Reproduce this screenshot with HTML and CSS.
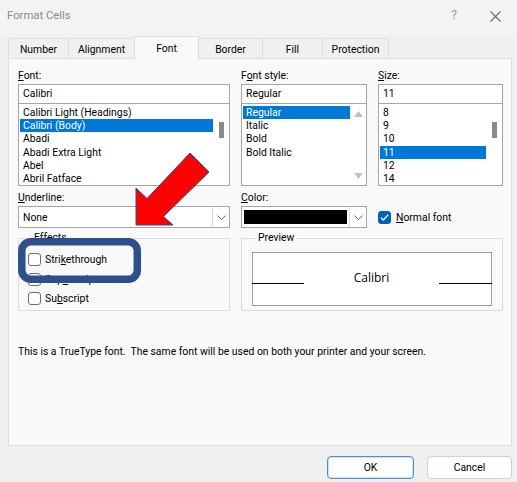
FILE: index.html
```html
<!DOCTYPE html>
<html lang="en">
<head>
    <meta charset="UTF-8">
    <title>Format Cells</title>
    <link rel="stylesheet" href="styles.css">
</head>
<body>
    <div class="dialog">
        <div class="titlebar">
            <div class="title">Format Cells</div>
            <div class="title-btns">
                <span class="help">?</span>
                <svg class="close" width="11" height="11" viewBox="0 0 11 11"><path d="M0.5 0.5 L10.5 10.5 M10.5 0.5 L0.5 10.5" stroke="#6b6b6b" stroke-width="1.1" fill="none"/></svg>
            </div>
        </div>

        <div class="tabs">
            <div class="tab w60">Number</div>
            <div class="tab w66">Alignment</div>
            <div class="tab w64 active">Font</div>
            <div class="tab w64">Border</div>
            <div class="tab w60">Fill</div>
            <div class="tab w66">Protection</div>
        </div>

        <div class="panel">
            <div class="grid">
                <div class="col">
                    <div class="label"><u>F</u>ont:</div>
                    <div class="input">Calibri</div>
                    <div class="list">
                        <div class="items">
                            <div class="item">Calibri Light (Headings)</div>
                            <div class="item sel">Calibri (Body)</div>
                            <div class="item">Abadi</div>
                            <div class="item">Abadi Extra Light</div>
                            <div class="item">Abel</div>
                            <div class="item">Abril Fatface</div>
                        </div>
                        <div class="scroll"><div class="thumb"></div></div>
                    </div>
                </div>
                <div class="col">
                    <div class="label">F<u>o</u>nt style:</div>
                    <div class="input">Regular</div>
                    <div class="list">
                        <div class="items">
                            <div class="item sel">Regular</div>
                            <div class="item">Italic</div>
                            <div class="item">Bold</div>
                            <div class="item">Bold Italic</div>
                        </div>
                        <div class="scroll arrows">
                            <svg width="9" height="6" viewBox="0 0 9 6"><path d="M0 6 L4.5 0 L9 6 Z" fill="#c2c2c2"/></svg>
                            <svg width="9" height="6" viewBox="0 0 9 6"><path d="M0 0 L4.5 6 L9 0 Z" fill="#c2c2c2"/></svg>
                        </div>
                    </div>
                </div>
                <div class="col">
                    <div class="label"><u>S</u>ize:</div>
                    <div class="input">11</div>
                    <div class="list">
                        <div class="items">
                            <div class="item">8</div>
                            <div class="item">9</div>
                            <div class="item">10</div>
                            <div class="item sel">11</div>
                            <div class="item">12</div>
                            <div class="item">14</div>
                        </div>
                        <div class="scroll"><div class="thumb"></div></div>
                    </div>
                </div>

                <div class="col">
                    <div class="label gap"><u>U</u>nderline:</div>
                    <div class="combo">
                        <div class="combo-val">None</div>
                        <div class="combo-btn"><svg width="9" height="5" viewBox="0 0 9 5"><path d="M0.5 0.5 L4.5 4.5 L8.5 0.5" stroke="#606060" fill="none"/></svg></div>
                    </div>
                </div>
                <div class="col">
                    <div class="label gap"><u>C</u>olor:</div>
                    <div class="combo">
                        <div class="swatch"></div>
                        <div class="combo-btn"><svg width="9" height="5" viewBox="0 0 9 5"><path d="M0.5 0.5 L4.5 4.5 L8.5 0.5" stroke="#606060" fill="none"/></svg></div>
                    </div>
                </div>
                <div class="col">
                    <div class="label gap">&nbsp;</div>
                    <div class="normal">
                        <span class="check on"><svg width="9" height="7" viewBox="0 0 9 7"><path d="M0.8 3.6 L3.3 6 L8.2 0.8" stroke="#fff" stroke-width="1.3" fill="none"/></svg></span>
                        <span><u>N</u>ormal font</span>
                    </div>
                </div>

                <fieldset class="group effects">
                    <legend>Effects</legend>
                    <div class="row"><span class="check"></span><span>Stri<u>k</u>ethrough</span></div>
                    <div class="row"><span class="check"></span><span>Sup<u>e</u>rscript</span></div>
                    <div class="row"><span class="check"></span><span>Su<u>b</u>script</span></div>
                </fieldset>
                <fieldset class="group preview">
                    <legend>Preview</legend>
                    <div class="sample">
                        <span class="rule"></span>
                        <span class="sample-text">Calibri</span>
                        <span class="rule"></span>
                    </div>
                </fieldset>
            </div>

            <p class="note">This is a TrueType font.&nbsp; The same font will be used on both your printer and your screen.</p>
        </div>

        <div class="footer">
            <button class="btn ok">OK</button>
            <button class="btn">Cancel</button>
        </div>

        <!-- annotation drawn on top of the screenshot -->
        <svg class="markup" width="517" height="482" viewBox="0 0 517 482">
            <polygon points="136,225 136,188 147,198.5 190,153 209,172 163.5,216.5 173,225" fill="#ff0000" stroke="#2f4e8c" stroke-width="1"/>
            <rect x="21.8" y="241.8" width="115.5" height="37.5" rx="9" ry="9" fill="none" stroke="#2f4e8c" stroke-width="7.5"/>
        </svg>
    </div>
</body>
</html>
```

FILE: styles.css
```css
*{margin:0;padding:0;box-sizing:border-box}
body{width:517px;height:482px;overflow:hidden;background:#f0f0f0;font-family:Roboto,"Noto Sans",sans-serif;font-size:10.4px;color:#000}
u{text-decoration:underline;text-underline-offset:1px}
.dialog{position:relative;width:517px;height:482px;background:#f0f0f0}

.titlebar{height:36px;display:flex;justify-content:space-between;align-items:flex-start;padding:8px 0 0 7px;background:#f3f3f3}
.title{font-size:11.3px;color:#8c8c8c;line-height:15px}
.title-btns{display:flex;align-items:center;gap:33px;padding-right:16px;height:15px}
.help{font-size:12px;color:#9a9a9a;line-height:15px}
.close{display:block;margin-top:1px}

.tabs{display:flex;align-items:flex-end;height:22px;padding-left:8px;position:relative;z-index:1}
.tab{height:20px;border:1px solid #dedede;border-bottom:none;margin-right:-1px;background:#f0f0f0;display:flex;align-items:center;justify-content:center;line-height:14px;padding-top:3px}
.tab.active{height:23px;background:#f9f9f9;margin-bottom:-1px;padding:1px 0 0}
.w60{width:61px}.w64{width:65px}.w66{width:67px}

.panel{margin:0 5px 0 8px;height:388px;background:#f9f9f9;border:1px solid #dedede;padding:9px 8px 0 9px}
.grid{display:grid;grid-template-columns:212px 126px 125px;column-gap:11px}
.label{height:16px;line-height:16px}
.label.gap{margin-top:4px}
.input{height:20px;border:1px solid #a6a6a6;background:#fff;padding:0 4px;line-height:18px}
.list{height:83px;margin-top:-1px;border:1px solid #a6a6a6;background:#fff;display:flex;padding-top:2px}
.items{flex:1;padding-left:1px}
.item{height:13.2px;line-height:13.8px;padding-left:3px;white-space:nowrap}
.item.sel{background:#0078d7;color:#fff}
.scroll{width:16px;display:flex;justify-content:center}
.thumb{width:5px;height:16px;margin-top:16px;background:#8a8a8a}
.arrows{flex-direction:column;justify-content:space-between;align-items:center;padding:5px 0 6px}
.arrows svg{display:block}

.combo{height:22px;border:1px solid #a6a6a6;background:#fff;display:flex}
.combo-val{flex:1;padding-left:4px;line-height:21px}
.combo-btn{width:17px;border-left:1px solid #dcdcdc;display:flex;align-items:center;justify-content:center}
.combo-btn svg{display:block}
.swatch{flex:1;margin:3px 2px 3px 2px;background:#000}
.normal{height:22px;display:flex;align-items:center;gap:5px}

.check{width:13px;height:13px;border:1px solid #6e6e6e;border-radius:3px;background:#fff;display:inline-flex;align-items:center;justify-content:center;flex:none}
.check.on{background:#005fb8;border-color:#005fb8}
.check svg{display:block}

.group{margin-top:3px;border:1px solid #dcdcdc;border-radius:2px;min-width:0}
.group legend{margin-left:4px;padding:0 2px;line-height:14px}
.effects{height:80px;padding:5px 0 0 9px}
.row{height:19.5px;display:flex;align-items:center;gap:4px}
.preview{grid-column:2 / span 2;padding:7px 10px 0 10px}
.sample{height:54px;background:#fff;border:1px solid #9c9c9c;display:grid;grid-template-columns:51px 1fr 52px}
.rule{height:31px;border-bottom:1px solid #000;margin-left:-1px}
.rule:last-child{margin-left:0;margin-right:-1px}
.sample-text{text-align:center;font-family:"Open Sans",sans-serif;font-size:12px;line-height:18px;margin-top:16px}

.note{margin-top:33px;line-height:16px}

.footer{display:flex;justify-content:flex-end;gap:13px;padding:10px 5px 0 0}
.btn{height:23px;border:1px solid #d0d0d0;border-radius:4px;background:#fdfdfd;font-family:inherit;font-size:10.4px;color:#000;width:85px}
.btn.ok{width:87px;border:1px solid #4f8ed1;box-shadow:inset 0 0 0 1px #cfe0f3}

.markup{position:absolute;left:0;top:0;pointer-events:none}
```
